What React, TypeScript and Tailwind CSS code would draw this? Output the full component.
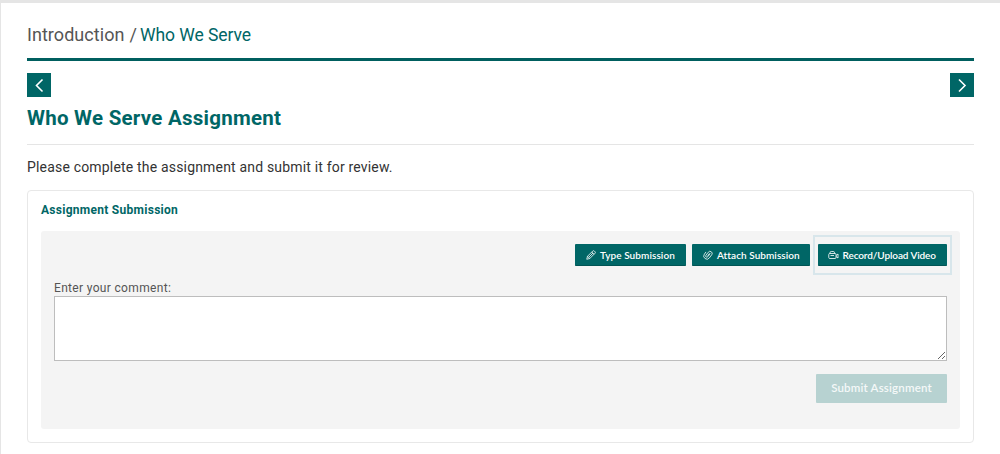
import { useState, type ReactNode } from "react";

function PencilIcon() {
  return (
    <svg viewBox="0 0 20 20" className="h-2.5 w-2.5" fill="none" stroke="currentColor" strokeWidth={1.6} strokeLinejoin="round">
      <path d="M1.500 18.500 3 12.500 13.500 2q1.500-1.500 3 0L18 3.500q1.500 1.500 0 3L7.500 17Z" />
      <path d="m3 12.500 4.500 4.500M11.500 4l4.500 4.500M5.500 14.500 14 6" />
    </svg>
  );
}

function ClipIcon() {
  return (
    <svg viewBox="0 0 20 20" className="h-2.5 w-2.5" fill="none" stroke="currentColor" strokeWidth={1.6} strokeLinecap="round">
      <path d="m14 7.500-4.500 6a2.300 2.300 0 0 1-3.700-2.800l4.700-6.200a4.300 4.300 0 0 1 7 5l-4.700 6.200A6.200 6.200 0 0 1 2.700 8.500L5.500 4.500" />
      <path d="m10 11 2.500-3.500" />
    </svg>
  );
}

function CameraIcon() {
  return (
    <svg viewBox="0 0 22 20" className="h-2.5 w-[11px]" fill="none" stroke="currentColor" strokeWidth={1.6} strokeLinejoin="round">
      <path d="M4 7V5.500q0-2.500 2.500-2.500h4Q13 3 13 5.500V7" />
      <rect x="1.500" y="7" width="14.500" height="10" rx="2" />
      <path d="m16 11 4-3v8l-4-3M5 11h7" />
    </svg>
  );
}

function NavButton({ label, d }: { label: string; d: string }) {
  return (
    <button type="button" aria-label={label} className="flex h-6 w-6 items-center justify-center bg-[#006666] text-white">
      <svg viewBox="0 0 24 24" className="h-6 w-6" fill="none" stroke="currentColor" strokeWidth={1.6}>
        <path d={d} />
      </svg>
    </button>
  );
}

function ActionButton({ icon, className, children }: { icon: ReactNode; className: string; children: ReactNode }) {
  return (
    <button
      type="button"
      className={`flex h-[22px] items-center rounded-[1px] border-b border-[#005454] bg-[#006666] pt-px font-[Lato,sans-serif] text-[10px] font-semibold whitespace-nowrap text-white ${className}`}
    >
      {icon}
      <span>{children}</span>
    </button>
  );
}

export default function App() {
  const [comment, setComment] = useState("");

  return (
    <div className="h-[454px] overflow-hidden border-t-[3px] border-l border-[#e5e5e5] bg-white px-[26px] font-[Roboto,'Noto_Sans',sans-serif]">
      <nav className="flex h-[58px] items-baseline border-b-[3px] border-[#005f5f] pt-[18px] leading-[27px] text-[#555]">
        <span className="text-[18px] tracking-[0.05px]">Introduction</span>
        <span className="mr-[3px] ml-[5px] text-[18px]">/</span>
        <span className="text-[17.500px] tracking-[-0.05px] text-[#006666]">Who We Serve</span>
      </nav>

      <div className="mt-3 flex justify-between">
        <NavButton label="Previous" d="M15.500 6.500 9.500 12.500l6 6" />
        <NavButton label="Next" d="m9 6.500 6 6-6 6" />
      </div>

      <h1 className="flex h-12 items-center border-b border-[#e5e5e5] pb-[5px] text-[20.500px] font-bold tracking-[0.25px] text-[#006666]">
        Who We Serve Assignment
      </h1>

      <p className="flex h-[45px] items-center text-[14px] tracking-[0.18px] text-[#333]">
        Please complete the assignment and submit it for review.
      </p>

      <section className="h-[253px] rounded-[4px] border border-[#e8e8e8] px-[13px] pt-[10px]">
        <h2 className="h-[30px] text-[12px] leading-[19px] font-bold tracking-[0.28px] text-[#006666]">
          Assignment Submission
        </h2>

        <div className="h-[198px] rounded-[3px] bg-[#f4f4f4] px-[13px] pt-1">
          <div className="-mr-[5px] flex items-center justify-end">
            <ActionButton icon={<PencilIcon />} className="mr-[6px] w-[111px] gap-[4px] pl-[11px] tracking-[0.08px]">Type Submission</ActionButton>
            <ActionButton icon={<ClipIcon />} className="mr-[3px] w-[118px] gap-[4px] pl-[11px] tracking-[0.06px]">Attach Submission</ActionButton>
            <div className="border-2 border-[#d8e6eb] py-[7px] pr-[3px] pl-[2.500px]">
              <ActionButton icon={<CameraIcon />} className="w-[129.500px] gap-[4px] pl-[10px] tracking-[-0.1px]">Record/Upload Video</ActionButton>
            </div>
          </div>

          <label htmlFor="comment" className="mt-[4px] block h-[17px] text-[12px] leading-[18px] tracking-[0.33px] text-[#555]">
            Enter your comment:
          </label>
          <textarea
            id="comment"
            value={comment}
            onChange={(e) => setComment(e.target.value)}
            className="block h-[65px] w-full border border-[#bdbdbd] bg-white p-2 text-[12px] outline-none"
          />

          <div className="mt-[13px] flex justify-end">
            <button
              type="submit"
              disabled
              className="h-[29px] w-[131px] rounded-[1px] bg-[#b7d2d1] pb-px font-[Lato,sans-serif] text-[11.500px] font-semibold tracking-[0.18px] text-[#f4f8f8]"
            >
              Submit Assignment
            </button>
          </div>
        </div>
      </section>
    </div>
  );
}
